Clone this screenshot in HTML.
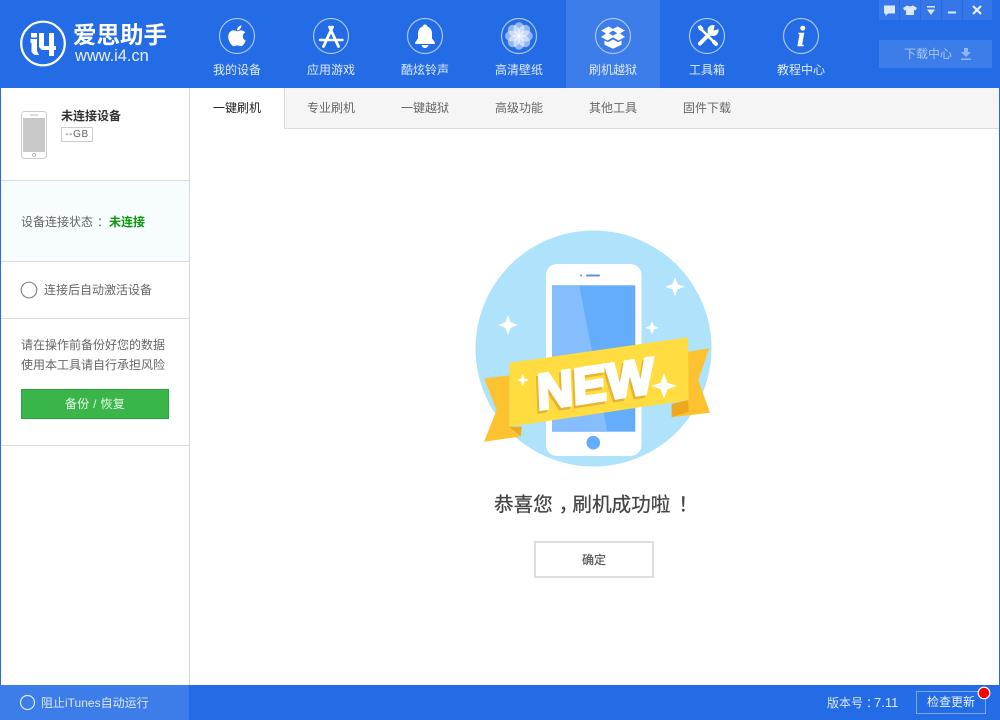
<!DOCTYPE html>
<html lang="zh-CN"><head><meta charset="utf-8"><title>爱思助手</title>
<style>
*{margin:0;padding:0;box-sizing:border-box}
html,body{width:1000px;height:720px;overflow:hidden;background:#fff}
body{position:relative;font-family:"Liberation Sans","Noto Sans CJK SC",sans-serif;font-size:12px;color:#666}
.a{position:absolute;white-space:nowrap}
.nl{position:absolute;top:62px;width:94px;text-align:center;color:#dfeafb;font-size:12px;line-height:16px}
.tab{position:absolute;top:100px;width:94px;text-align:center;line-height:16px;color:#666}
.ln{position:absolute;left:1px;width:188px;height:1px;background:#dcdcdc}
</style></head><body>
<div class="a" style="left:0;top:0;width:1000px;height:88px;background:#236ce6"></div>
<div class="a" style="left:566px;top:0;width:94px;height:88px;background:#3d7de9"></div>
<div class="a" style="left:0;top:88px;width:1px;height:597px;background:#236ce6"></div>
<div class="a" style="left:999px;top:88px;width:1px;height:597px;background:#236ce6"></div>

<svg class="a" style="left:0;top:0" width="1000" height="88" viewBox="0 0 1000 88">
<circle cx="43" cy="43.5" r="21.8" fill="none" stroke="#fff" stroke-width="2.2"/>
<g fill="#fff"><rect x="31" y="33" width="6" height="4.500"/><path d="M30.500 39h6.500v12l2 4h-4.500l-3-3V43h-1z"/><path d="M39 33h5v13h5V33h5v13h2v4h-2v6h-5v-6h-7l-3-3z"/></g>
<g fill="none" stroke="#a9c6f5" stroke-width="1.2"><circle cx="237" cy="36" r="17.5"/><circle cx="331" cy="36" r="17.5"/><circle cx="425" cy="36" r="17.5"/><circle cx="519" cy="36" r="17.5"/><circle cx="613" cy="36" r="17.5"/><circle cx="707" cy="36" r="17.5"/><circle cx="801" cy="36" r="17.5"/></g>
<path transform="translate(223.2,22) scale(1.15)" fill="#fff" d="M17.05 20.28c-.98.95-2.05.8-3.08.35-1.09-.46-2.09-.48-3.24 0-1.44.62-2.2.44-3.06-.35C2.79 15.25 3.51 7.59 9.05 7.31c1.35.07 2.29.74 3.08.8 1.18-.24 2.31-.93 3.57-.84 1.51.12 2.65.72 3.4 1.8-3.12 1.87-2.38 5.98.48 7.13-.57 1.5-1.31 2.99-2.54 4.09zM12.03 7.25c-.15-2.23 1.66-4.07 3.74-4.25.29 2.58-2.34 4.5-3.74 4.25z"/>
<g stroke="#fff" stroke-linecap="round" fill="none"><path stroke-width="2.800" d="M332.500 27l-9 19.500M329.500 27l9 19.500"/><path stroke-width="2.400" d="M320 40h22.500"/></g>
<path fill="#fff" d="M425 24.500c1.400 0 2.200 .9 2.300 2 3.300 1 4.700 3.800 4.700 7.500v4.500l2.800 3.800v1.700h-19.600v-1.700l2.800-3.800V34c0-3.700 1.400-6.500 4.700-7.500.1-1.100.9-2 2.300-2zM421.500 45h7c-.4 1.800-1.800 3-3.500 3s-3.100-1.200-3.500-3z"/>
<g fill="#fff"><g fill-opacity=".5"><ellipse cx="519" cy="29" rx="5.500" ry="6.800"/><ellipse cx="519" cy="43" rx="5.500" ry="6.800"/><ellipse cx="512" cy="36" rx="6.800" ry="5.500"/><ellipse cx="526" cy="36" rx="6.800" ry="5.500"/><ellipse cx="514" cy="31" rx="5.500" ry="6.800" transform="rotate(-45 514 31)"/><ellipse cx="524" cy="41" rx="5.500" ry="6.800" transform="rotate(-45 524 41)"/><ellipse cx="524" cy="31" rx="5.500" ry="6.800" transform="rotate(45 524 31)"/><ellipse cx="514" cy="41" rx="5.500" ry="6.800" transform="rotate(45 514 41)"/></g><circle cx="519" cy="36" r="1.500"/></g>
<g fill="#fff"><path d="M608.500 26.500l4.500 2.500 4.500-2.500 7.500 4-5 3 5 3.500-6.500 3.500-5.500-3.200-5.500 3.200-6.500-3.500 5-3.500-5-3z"/><path fill="#3d7de9" d="M613 30.500l4.200 2.700-4.200 2.600-4.200-2.600z"/><path d="M604.500 40.500l3.500 1.800 5-2.800 5 2.800 3.500-1.800v4.300l-8.500 4-8.500-4z"/></g>
<g stroke="#fff" stroke-linecap="round" fill="none"><path stroke-width="2.600" d="M700 28l15.500 15.500"/><path stroke-width="4" d="M700 43.500l11.500-11.500"/></g>
<path fill="#fff" d="M697.500 26.500l3-1.500 3 3-2.500 3-2-1z"/>
<circle cx="713" cy="30.500" r="5.500" fill="#fff"/><path fill="#236ce6" d="M713.500 30.500l1.500-6.500 5 1-2.500 4.500z"/>
<path stroke="#fff" stroke-width="4" stroke-linecap="round" d="M714 42l2 2"/>
<text x="801" y="46" text-anchor="middle" font-family="Liberation Serif" font-style="italic" font-weight="700" font-size="29" fill="#fff" stroke="#fff" stroke-width=".6">i</text>
<g fill="#3d7de9" opacity=".7"><rect x="879" y="0" width="20" height="20"/><rect x="900" y="0" width="20" height="20"/><rect x="921" y="0" width="20" height="20"/><rect x="942" y="0" width="20" height="20"/><rect x="963" y="0" width="29" height="20"/></g>
<path fill="#dbe7fb" d="M884 5.500h11v8h-7l-2.500 2.500v-2.500h-1.500z"/>
<path fill="#dbe7fb" d="M907 5.500l3 1 3-1 4 2.500-1.500 2.500-1.500-.5v5h-8v-5l-1.500.5-1.500-2.500z"/>
<path fill="#dbe7fb" d="M927 6h8v1.500h-8zM927 9.500h8l-4 5.500z"/>
<rect x="948" y="11.500" width="8" height="2" fill="#dbe7fb"/>
<path stroke="#e5eefc" stroke-width="2.200" d="M973 6l8 8M981 6l-8 8"/>
<rect x="879" y="40" width="113" height="28" fill="#3d7de9"/>
<path fill="#8fb5f2" d="M964 48h4v4h3l-5 5-5-5h3zM961 58.500h10v1.500h-10z"/>
</svg>
<div class="a" style="left:73px;top:21px;font-size:23.500px;line-height:28px;font-weight:700;color:#fff">爱思助手</div>
<div class="a" style="left:75px;top:46px;font-size:16.400px;line-height:20px;color:#e8f0fd">www.i4.cn</div>
<div class="nl" style="left:190px">我的设备</div><div class="nl" style="left:284px">应用游戏</div><div class="nl" style="left:378px">酷炫铃声</div><div class="nl" style="left:472px">高清壁纸</div><div class="nl" style="left:566px">刷机越狱</div><div class="nl" style="left:660px">工具箱</div><div class="nl" style="left:754px">教程中心</div>
<div class="a" style="left:904px;top:46px;line-height:16px;color:#a9c6f5">下载中心</div>

<div class="a" style="left:189px;top:88px;width:1px;height:597px;background:#d8d8d8"></div>
<div class="a" style="left:190px;top:88px;width:809px;height:41px;background:#f5f5f5;border-bottom:1px solid #dcdcdc"></div>
<div class="a" style="left:190px;top:88px;width:95px;height:41px;background:#fff;border-right:1px solid #d8d8d8"></div>
<div class="tab" style="left:190px;color:#222">一键刷机</div><div class="tab" style="left:284px">专业刷机</div><div class="tab" style="left:378px">一键越狱</div><div class="tab" style="left:472px">高级功能</div><div class="tab" style="left:566px">其他工具</div><div class="tab" style="left:660px">固件下载</div>

<svg class="a" style="left:20px;top:110px" width="28" height="50"><rect x="1.500" y="1.500" width="25" height="47" rx="3" fill="#fff" stroke="#ccc"/><rect x="3" y="8" width="22" height="34" fill="#c8c8c8"/><rect x="10" y="4.500" width="8" height="1" fill="#bbb"/><circle cx="14" cy="45" r="1.600" fill="none" stroke="#bbb"/></svg>
<div class="a" style="left:61px;top:108px;line-height:16px;font-weight:700;color:#333">未连接设备</div>
<div class="a" style="left:61px;top:127px;width:32px;height:15px;border:1px solid #ccc;border-radius:1px;font-size:10px;line-height:13px;text-align:center;color:#666;letter-spacing:.6px">--GB</div>
<div class="ln" style="top:180px"></div>
<div class="a" style="left:1px;top:181px;width:188px;height:80px;background:#f7fcff"></div>
<div class="a" style="left:21px;top:214px;line-height:16px;color:#666">设备连接状态<span style="position:relative;left:4px">：</span></div>
<div class="a" style="left:109px;top:214px;line-height:16px;color:#0a9a0a;font-weight:700">未连接</div>
<div class="ln" style="top:261px"></div>
<svg class="a" style="left:20px;top:281px" width="18" height="18"><circle cx="9" cy="9" r="7.800" fill="#fff" stroke="#888" stroke-width="1.200"/></svg>
<div class="a" style="left:44px;top:282px;line-height:16px;color:#666">连接后自动激活设备</div>
<div class="ln" style="top:318px"></div>
<div class="a" style="left:21px;top:335px;line-height:20px;color:#666">请在操作前备份好您的数据<br>使用本工具请自行承担风险</div>
<div class="a" style="left:21px;top:389px;width:148px;height:30px;background:#39b54a;border:1px solid #2aa43c;color:#eafbe9;text-align:center;line-height:28px;letter-spacing:.3px">备份 / 恢复</div>
<div class="ln" style="top:445px"></div>

<svg class="a" style="left:460px;top:230px" width="270" height="250" viewBox="0 0 270 250">
<circle cx="133.500" cy="118.500" r="118" fill="#aee3fb"/>
<rect x="86" y="34" width="95.500" height="192" rx="11" fill="#fff"/>
<rect x="92" y="55.300" width="83.300" height="146.400" fill="#64adfd"/>
<path d="M92 55.300h27.300l28 146.400H92z" fill="#86bdfd"/>
<circle cx="133.300" cy="212.700" r="6.800" fill="#64adfd"/>
<rect x="126" y="44.500" width="14" height="2" rx="1" fill="#5f8fe0"/><circle cx="121" cy="45.500" r="1" fill="#5f8fe0"/>
<path d="M24 148.500l25.300-3v51.500h12.400l-1 9.500L24 211.700l12.700-31.700z" fill="#fcc22f"/>
<path d="M49.300 196.700h12.400l-1 9.500z" fill="#eda81d"/>
<path d="M228 121.700l21.300-3.400-11 31.700 11.700 32.700-38.300 4.600v-13.300l16.300-4z" fill="#fcc22f"/>
<path d="M211.700 174l16.300-4 .7 11.700-17 5.600z" fill="#eda81d"/>
<path d="M49.300 132.700L228 107.300l.7 62.700-179.400 26.700z" fill="#ffdc3f"/>
<g transform="translate(136,171) rotate(-8.500) skewX(-6)" font-family="Liberation Sans" font-weight="700" font-size="50" text-anchor="middle"><text x="-2" y="2.500" fill="#e6b332" stroke="#e6b332" stroke-width="3.200" textLength="118" lengthAdjust="spacingAndGlyphs">NEW</text><text x="0" y="0" fill="#fff" stroke="#fff" stroke-width="3.200" textLength="118" lengthAdjust="spacingAndGlyphs">NEW</text></g>
<g fill="#fff"><path d="M48 85l2.800 7.200 7.200 2.800-7.200 2.800-2.800 7.200-2.800-7.200-7.200-2.800 7.200-2.800z"/><path d="M215 47l2.600 7.200 7.400 2.500-7.400 2.500-2.600 7.200-2.600-7.200-7.400-2.500 7.400-2.500z"/><path d="M192 91l1.900 4.800 4.800 1.900-4.800 1.900-1.900 4.800-1.900-4.800-4.800-1.900 4.800-1.900z"/><path d="M62.700 144l1.600 4.400 4.400 1.600-4.400 1.600-1.600 4.400-1.600-4.400-4.400-1.600 4.400-1.600z"/><path d="M204 143l3.300 9.700 9.700 3.300-9.700 3.300-3.300 9.700-3.300-9.700-9.700-3.300 9.700-3.300z"/></g>
</svg>

<div class="a" style="left:494px;top:491px;font-size:19.600px;line-height:28px;color:#444;-webkit-text-stroke:.25px #444">恭喜您<span style="position:relative;left:6px">，</span>刷机成功啦<span style="position:relative;left:8px">！</span></div>
<div class="a" style="left:534px;top:541px;width:120px;height:37px;border:2px solid #dedede;text-align:center;line-height:34px;color:#555;-webkit-text-stroke:.2px #555">确定</div>

<div class="a" style="left:0;top:685px;width:1000px;height:35px;background:#236ce6"></div>
<div class="a" style="left:0;top:685px;width:189px;height:35px;background:#3d7de9"></div>
<svg class="a" style="left:19px;top:694px" width="17" height="17"><circle cx="8.500" cy="8.500" r="7" fill="none" stroke="#dbe7fb" stroke-width="1.200"/></svg>
<div class="a" style="left:41px;top:695px;line-height:16px;color:#dbe7fb">阻止iTunes自动运行</div>
<div class="a" style="left:827px;top:695px;line-height:16px;color:#dbe7fb">版本号<span style="position:relative;left:3px">：</span><span style="position:relative;left:-1px;font-size:13px">7.11</span></div>
<div class="a" style="left:916px;top:691px;width:70px;height:23px;border:1px solid #7ea6ef;text-align:center;line-height:21px;color:#eaf1fd">检查更新</div>
<svg class="a" style="left:977px;top:686px" width="14" height="14"><circle cx="7" cy="7" r="5.800" fill="#f00" stroke="#fff" stroke-width="1.200"/></svg>
</body></html>
